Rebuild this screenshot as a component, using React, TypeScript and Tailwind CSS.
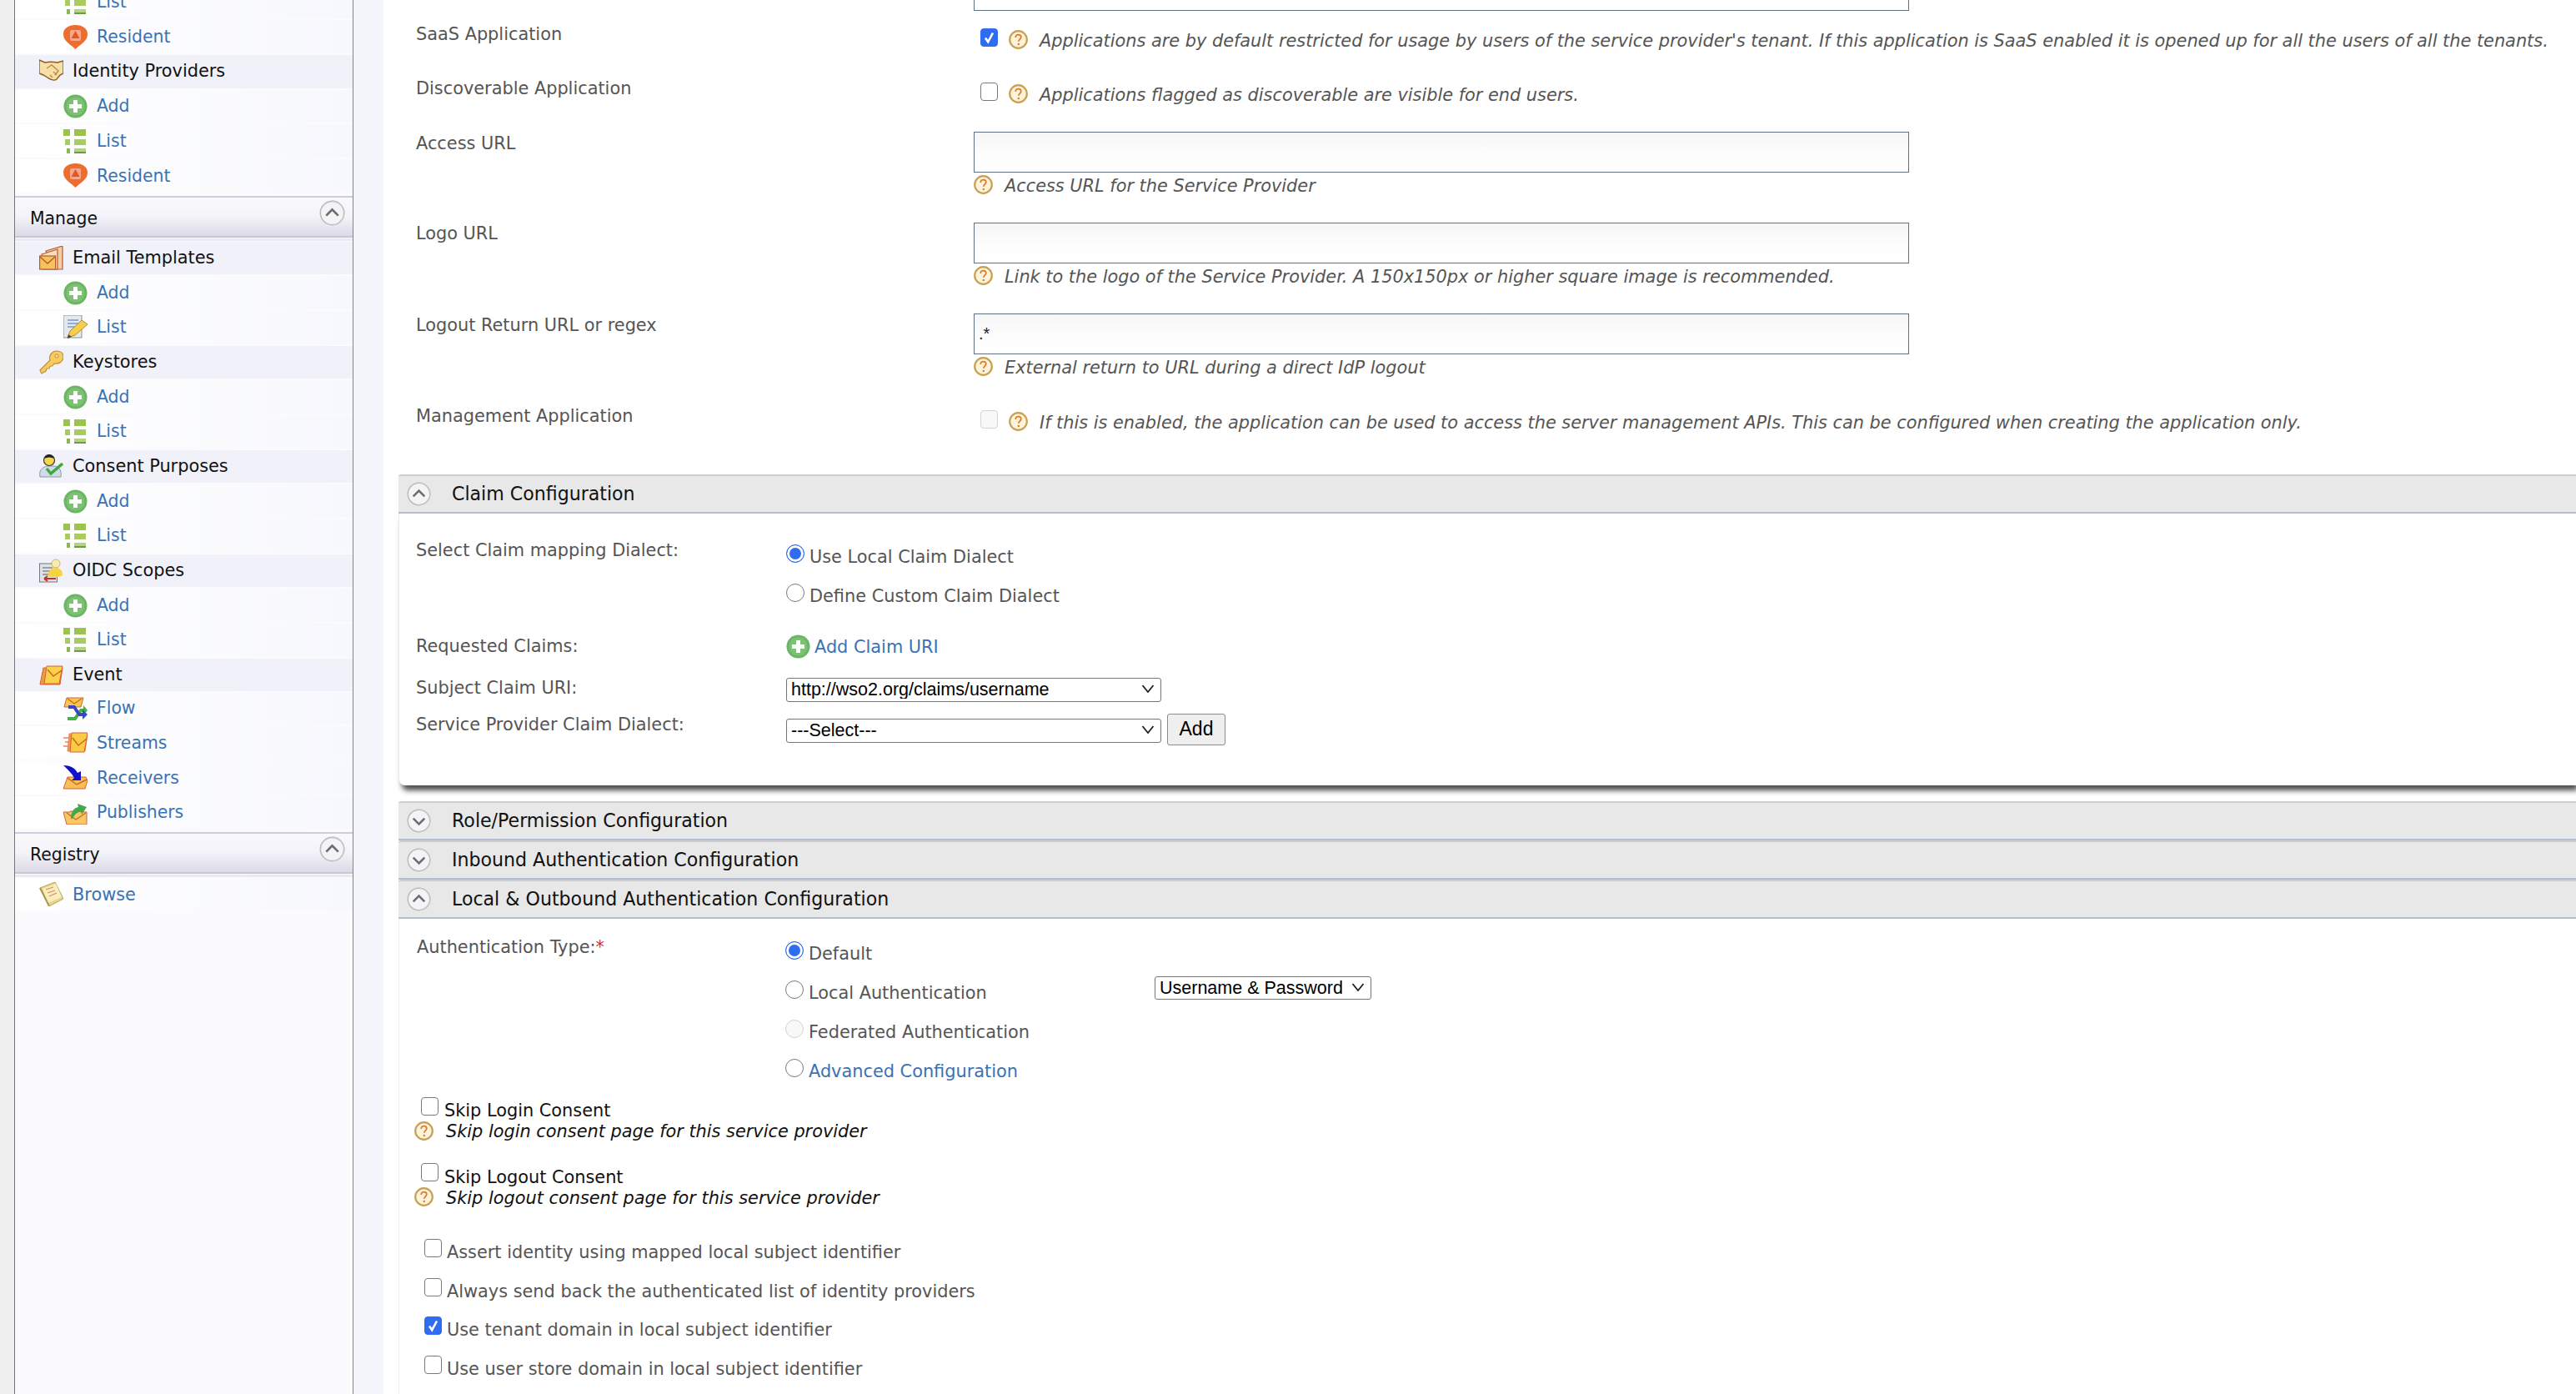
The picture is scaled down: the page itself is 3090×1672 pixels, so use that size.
import React from "react";

const S = ({ c }: { c: React.ReactNode }) => (
  <svg viewBox="0 0 29 29" className="w-[29px] h-[29px] shrink-0">{c}</svg>
);

const IPlus = () => (
  <S c={<>
    <circle cx="14.5" cy="14.5" r="14" fill="#6cb564" />
    <circle cx="14.5" cy="14.5" r="11" fill="#7dc273" />
    <path d="M14.5 7v15M7 14.5h15" stroke="#fff" strokeWidth="5" />
  </>} />
);
const IList = () => (
  <S c={<>
    <rect x="0" y="0" width="8" height="8" fill="#9cc24f" />
    <rect x="13" y="0" width="14" height="8" fill="#9cc24f" />
    <rect x="2" y="12" width="6" height="7" fill="#a9cc62" />
    <rect x="13" y="12" width="14" height="7" fill="#a9cc62" />
    <rect x="4" y="23" width="4" height="6" fill="#8db55a" />
    <rect x="13" y="23" width="14" height="6" fill="#b4d283" />
    <rect x="13" y="27" width="14" height="2" fill="#6e9a4a" />
  </>} />
);
const IResident = () => (
  <S c={<>
    <path d="M14.5 29 C10 24 0 20 0 11 C0 4 6 0 14.5 0 C23 0 29 4 29 11 C29 20 19 24 14.5 29Z" fill="#ee6c2d" />
    <rect x="8" y="6" width="13" height="13" rx="2" fill="#f6a888" />
    <path d="M14.5 7l5 9h-10z" fill="#e2552a" />
  </>} />
);
const IHands = () => (
  <S c={<>
    <path d="M0 1l7 3c5-1 9-1 15 0l7-2 0 15-4 2-4 5c-4 3-8 0-11-2l-5-3-5-2z" fill="#f7dfa8" stroke="#8e5a25" strokeWidth="1.4" />
    <path d="M9 11l6-4 8 7-4 5M13 19l3 3M17 15l4 4" fill="none" stroke="#c08a48" strokeWidth="1.4" />
  </>} />
);
const IEmailStack = () => (
  <S c={<>
    <path d="M8 6L28 0v28H20z" fill="#f2cfa8" stroke="#b85a2a" strokeWidth="1.2" />
    <path d="M3 10L22 4v24H4z" fill="#f7e0c2" stroke="#b85a2a" strokeWidth="1.2" />
    <rect x="0.6" y="12" width="19" height="16" fill="#f5c25f" stroke="#b85a2a" strokeWidth="1.2" />
    <path d="M1 13l9 8 9-8" fill="none" stroke="#b85a2a" strokeWidth="1.4" />
  </>} />
);
const IEdit = () => (
  <S c={<>
    <rect x="0" y="0" width="22" height="27" fill="#e4e8ef" stroke="#8b8f96" strokeWidth="1" />
    <path d="M5 6h13M5 10h13M5 14h9" stroke="#6f9bd6" strokeWidth="1.6" />
    <path d="M5 27l3-8L22 6l7 5L14 24z" fill="#f3cf4c" stroke="#b98a2a" strokeWidth="1" />
    <path d="M5 28l1-5 4 3z" fill="#444" />
  </>} />
);
const IKey = () => (
  <S c={<>
    <path d="M1 24l12-12c-2-6 3-11 8-11s8 3 8 7c0 6-6 9-11 8l-2 3h-3l-1 3h-3l-1 3-5 3z" fill="#f6cb63" stroke="#c98e2c" strokeWidth="1.2" />
    <circle cx="21" cy="7" r="2" fill="#fbe9a6" stroke="#c98e2c" />
  </>} />
);
const IPerson = () => (
  <S c={<>
    <path d="M1 27c-2-10 5-12 9-13h8c7 1 9 6 8 13z" fill="#cfdce8" stroke="#8b98a6" />
    <circle cx="12" cy="7" r="6.5" fill="#f2d64b" stroke="#333" strokeWidth="1.2" />
    <path d="M6 5c2-6 10-6 12 0-4-2-8-2-12 0z" fill="#222" />
    <path d="M9 17l5 6L28 11" fill="none" stroke="#3fa83f" strokeWidth="3.4" />
  </>} />
);
const IOidc = () => (
  <S c={<>
    <rect x="0.5" y="6" width="21" height="22" fill="#dfe2e6" stroke="#777" />
    <path d="M4 11h12M4 15h10M4 19h8" stroke="#888" strokeWidth="1.4" />
    <circle cx="20" cy="6" r="5" fill="#f8ecb0" stroke="#c9b66a" />
    <path d="M11 20c0-7 5-9 9-9s8 3 8 8c0 2-3 3-8 3s-9 0-9-2z" fill="#f6d341" />
    <path d="M6 24h14M6 24l4-3M6 24l4 3" stroke="#c3312b" strokeWidth="2" fill="none" />
  </>} />
);
const IEvent = () => (
  <S c={<>
    <path d="M5 6h23l-3 20H1z" fill="#ef9a3c" stroke="#d6603c" strokeWidth="1" />
    <path d="M9 4h19l-4 21H6z" fill="#fbd04a" stroke="#d6603c" strokeWidth="1" />
    <path d="M10 8l7 8 10-7" fill="none" stroke="#c66a1e" strokeWidth="1.5" />
  </>} />
);
const IFlow = () => (
  <S c={<>
    <path d="M4 2h20l-3 11H1z" fill="#fbc64e" stroke="#d6603c" />
    <path d="M5 3l8 6 9-6" fill="none" stroke="#c66a1e" strokeWidth="1.2" />
    <path d="M5 25h8l7-10h4v-4l5 6-5 6v-4h-2l-7 10H5z" fill="#43b04a" />
    <path d="M6 11h8l6 9h3v-4l6 6-6 6v-4h-5l-6-9H6z" fill="#3846c0" />
  </>} />
);
const IStreams = () => (
  <S c={<>
    <path d="M0 8h6M2 13h4M0 18h6" stroke="#e8836a" strokeWidth="1.4" />
    <path d="M7 3h22l-3 21H5z" fill="#ef9a3c" stroke="#e8836a" />
    <path d="M10 2h19l-4 23H8z" fill="#fbcb48" stroke="#d6603c" />
    <path d="M11 8l7 9 10-8" fill="none" stroke="#c66a1e" strokeWidth="1.5" />
  </>} />
);
const IReceivers = () => (
  <S c={<>
    <path d="M5 14h22l2 4-3 10H0z" fill="#f7bf55" stroke="#d6603c" />
    <path d="M5 15l11 8 12-6" fill="none" stroke="#c66a1e" strokeWidth="1.5" />
    <path d="M0 0c8 0 14 3 17 9l4-2v11H10l3-3C10 9 5 5 0 0z" fill="#1010c8" />
  </>} />
);
const IPublishers = () => (
  <S c={<>
    <path d="M0 14h8v-1l20 1v15H4z" fill="#f7c766" stroke="#d6603c" />
    <path d="M4 15l11 8 12-8" fill="none" stroke="#c66a1e" strokeWidth="1.3" />
    <path d="M9 22c0-9 4-13 9-14l-1-4 11 4-6 9-1-4c-4 1-8 4-10 9z" fill="#43a84a" />
  </>} />
);
const IBook = () => (
  <S c={<>
    <path d="M1 7L19 0l10 20-17 9z" fill="#e9d38b" stroke="#b9a563" />
    <path d="M4 8L20 2l7 16-16 7z" fill="#f7eec0" />
    <path d="M8 9l9-3M10 13l9-3M12 17l9-4" stroke="#d98a5a" strokeWidth="1.2" />
    <path d="M1 7l11 22" stroke="#a99650" strokeWidth="2" />
  </>} />
);
const Help = () => (
  <svg viewBox="0 0 23 23" className="w-[23px] h-[23px] shrink-0">
    <circle cx="11.5" cy="11.5" r="10.3" fill="#fbf3dc" stroke="#c9a04f" strokeWidth="2.2" />
    <path d="M8.2 9c0-2.2 1.4-3.4 3.4-3.4s3.2 1.2 3.2 3c0 2.4-3 2.6-3 5.2" fill="none" stroke="#dd7b2a" strokeWidth="1.8" />
    <circle cx="11.8" cy="17" r="1.2" fill="#dd7b2a" />
  </svg>
);
const Chevron = ({ up, size }: { up: boolean; size: string }) => (
  <svg viewBox="0 0 30 30" className={size + " shrink-0"}>
    <circle cx="15" cy="15" r="13.7" fill="#f4f4f6" stroke="#bdbdbd" strokeWidth="1.6" />
    <path d="M15 29a14 14 0 0 0 0-28" fill="none" stroke="#c9c9c9" strokeWidth="1" />
    <path d={up ? "M8 18l7-7 7 7" : "M8 12l7 7 7-7"} fill="none" stroke="#6d6d6d" strokeWidth="2.6" />
  </svg>
);

const Head = ({ icon, text, link, tx }: { icon: React.ReactNode; text: string; link?: boolean; tx?: string }) => (
  <div className={"h-[39.67px] mb-[2px] flex items-center pl-[29px] gap-[11px] text-[20.85px] " + (link ? "bg-[linear-gradient(90deg,#ffffff,#f7f8fd)] text-[#3a72b5]" : "bg-[#f0f1f9] text-[#111111]")}>
    {icon}
    <span className={tx ?? ""}>{text}</span>
  </div>
);
const Sub = ({ icon, text }: { icon: React.ReactNode; text: string }) => (
  <div className="h-[39.67px] mb-[2px] flex items-center pl-[58px] gap-[11px] bg-[linear-gradient(90deg,#ffffff,#f7f8fd)] text-[#3a72b5]">
    {icon}
    <span>{text}</span>
  </div>
);
const Section = ({ text, mt }: { text: string; mt: string }) => (
  <div className={mt + " h-[55px] shrink-0"}>
    <div className="h-[50px] flex items-center justify-between pl-[18px] pr-[9px] text-[#111111] border-t-2 border-t-[#cfcddc] border-b-2 border-b-[#c9c5d8] bg-[linear-gradient(180deg,#f9f9fd,#f3f3f9_50%,#dcdae6)]">
      <span className="mt-[6px]">{text}</span>
      <Chevron up size="w-[31px] h-[31px] -mt-[8px]" />
    </div>
    <div className="h-[3px] mt-[1px] bg-[#e9e9f0]" />
  </div>
);

const Sidebar = () => (
  <aside className="w-[460px] shrink-0 h-[1672px] overflow-hidden flex bg-[#f4f5fb] text-[20.4px] font-['DejaVu_Sans',sans-serif]">
    <div className="w-[17px] bg-[#f0f0f0] shrink-0" />
    <div className="w-[407px] shrink-0 bg-[#fbfbfe] border-l-[1.5px] border-l-[#757575] border-r-[1.5px] border-r-[#8b8b55] -mb-px">
      <div className="-mt-[17.3px]">
        <Sub icon={<IList />} text="List" />
        <Sub icon={<IResident />} text="Resident" />
        <Head icon={<IHands />} text="Identity Providers" />
        <Sub icon={<IPlus />} text="Add" />
        <Sub icon={<IList />} text="List" />
        <Sub icon={<IResident />} text="Resident" />
      </div>
      <Section text="Manage" mt="mt-[4px]" />
      <Head icon={<IEmailStack />} text="Email Templates" tx="mt-[1px]" />
      <Sub icon={<IPlus />} text="Add" />
      <Sub icon={<IEdit />} text="List" />
      <Head icon={<IKey />} text="Keystores" tx="mt-[1px]" />
      <Sub icon={<IPlus />} text="Add" />
      <Sub icon={<IList />} text="List" />
      <Head icon={<IPerson />} text="Consent Purposes" />
      <Sub icon={<IPlus />} text="Add" />
      <Sub icon={<IList />} text="List" />
      <Head icon={<IOidc />} text="OIDC Scopes" />
      <Sub icon={<IPlus />} text="Add" />
      <Sub icon={<IList />} text="List" />
      <Head icon={<IEvent />} text="Event" />
      <div className="-mt-[1.5px]">
        <Sub icon={<IFlow />} text="Flow" />
        <Sub icon={<IStreams />} text="Streams" />
        <Sub icon={<IReceivers />} text="Receivers" />
        <Sub icon={<IPublishers />} text="Publishers" />
      </div>
      <Section text="Registry" mt="mt-[3.5px]" />
      <Head icon={<IBook />} text="Browse" link tx="mt-[2px]" />
    </div>
  </aside>
);

const Txt = ({ className, children }: { className?: string; children: React.ReactNode }) => (
  <span className={"leading-[30px] whitespace-nowrap " + (className ?? "")}>{children}</span>
);

const TextField = ({ value }: { value?: string }) => (
  <input
    readOnly
    value={value ?? ""}
    className="block w-[1122px] h-[49px] border-[1.5px] border-[#5d6f82] bg-[linear-gradient(180deg,#f6f6f6,#fdfdfd_60%,#ffffff)] px-[5px] text-[#222222] text-[20px] font-['Liberation_Sans',sans-serif]"
  />
);

const Check = ({ on, disabled }: { on?: boolean; disabled?: boolean }) => (
  <span className="relative block w-[21px] h-[22px] shrink-0">
    <input
      type="checkbox"
      readOnly
      checked={!!on}
      disabled={disabled}
      className="block appearance-none m-0 w-full h-full rounded-[4px] border-[1.5px] border-[#7a7a7a] bg-white checked:bg-[#2f6cf0] checked:border-[#2f6cf0] disabled:border-[#d4d4d4] disabled:bg-[#f8f8f8]"
    />
    {on && (
      <svg viewBox="0 0 21 22" className="absolute inset-0 w-full h-full pointer-events-none">
        <path d="M6 11.5l3.2 4.8L15 5.5" fill="none" stroke="#fff" strokeWidth="2.6" />
      </svg>
    )}
  </span>
);
const Radio = ({ on, disabled }: { on?: boolean; disabled?: boolean }) => (
  <input
    type="radio"
    readOnly
    checked={!!on}
    disabled={disabled}
    className="block appearance-none m-0 w-[22px] h-[22px] shrink-0 rounded-full border-[1.5px] border-[#7a7a7a] bg-white checked:border-[#2f6cf0] checked:bg-[#2f6cf0] checked:shadow-[inset_0_0_0_3px_#ffffff] disabled:border-[#d4d4d4] disabled:bg-[#f8f8f8]"
  />
);

const Select = ({ value, w, h }: { value: string; w: string; h: string }) => (
  <div className={"relative shrink-0 " + w + " " + h}>
    <select
      value={value}
      onChange={() => {}}
      className="appearance-none w-full h-full rounded-[3px] border-[1.5px] border-[#767676] bg-white pl-[5px] text-[21.5px] text-black leading-none font-['Liberation_Sans',sans-serif]"
    >
      <option>{value}</option>
    </select>
    <svg viewBox="0 0 16 10" className="absolute right-[8px] top-[9px] w-[16px] h-[10px] pointer-events-none">
      <path d="M1.5 1l6.5 8 6.5-8" fill="none" stroke="#222" strokeWidth="1.8" />
    </svg>
  </div>
);

const ConfigHeader = ({ text, up, mt }: { text: string; up?: boolean; mt?: string }) => (
  <div className={(mt ?? "") + " h-[47px] shrink-0 flex items-center pl-[10px] gap-[25px] bg-[#e8e8e8] border-t-2 border-t-[#cdcdd0] border-b-2 border-b-[#b4bcd4] text-[#111111] text-[22.1px] rounded-tl-[3px]"}>
    <Chevron up={!!up} size="w-[29px] h-[29px]" />
    <span>{text}</span>
  </div>
);

const TopRow = ({ label, h, children, pt }: { label: string; h: string; children: React.ReactNode; pt?: string }) => (
  <div className={h + " flex shrink-0"}>
    <div className={"w-[690px] shrink-0 pl-[21px] " + (pt ?? "pt-[13px]")}>
      <Txt>{label}</Txt>
    </div>
    <div className="flex-1 min-w-0">{children}</div>
  </div>
);
const CheckRow = ({ on, disabled, text, pt }: { on?: boolean; disabled?: boolean; text: string; pt: string }) => (
  <div className={"flex items-start " + pt}>
    <div className="ml-[8px] mt-[-1px]"><Check on={on} disabled={disabled} /></div>
    <div className="ml-[13px] mt-[1px]"><Help /></div>
    <Txt className="ml-[14px] -mt-[1px] italic">{text}</Txt>
  </div>
);
const UrlBlock = ({ value, text }: { value?: string; text: string }) => (
  <div className="pt-[14px]">
    <TextField value={value} />
    <div className="flex items-start mt-[3px]">
      <Help />
      <Txt className="ml-[14px] -mt-[2px] italic">{text}</Txt>
    </div>
  </div>
);
const RadioLine = ({ on, disabled, children, w }: { on?: boolean; disabled?: boolean; children: React.ReactNode; w?: string }) => (
  <div className={"h-[47px] flex items-start shrink-0 " + (w ?? "")}>
    <div className="mt-[8px]"><Radio on={on} disabled={disabled} /></div>
    <Txt className="ml-[6px] mt-[8px]">{children}</Txt>
  </div>
);
const BottomCheck = ({ on, text }: { on?: boolean; text: string }) => (
  <div className="h-[46.67px] flex items-start pl-[30px] shrink-0">
    <Check on={on} />
    <Txt className="ml-[6px] mt-[1px]">{text}</Txt>
  </div>
);

const Main = () => (
  <main className="flex-1 min-w-0 h-[1672px] overflow-hidden pl-[18px] bg-white text-[#555555] text-[20.85px] font-['DejaVu_Sans',sans-serif]">
    <div className="h-[13px] overflow-hidden flex">
      <div className="w-[690px] shrink-0" />
      <div className="-mt-[36px]"><TextField /></div>
    </div>
    <TopRow label="SaaS Application" h="h-[65px]">
      <CheckRow on pt="pt-[22px]" text="Applications are by default restricted for usage by users of the service provider's tenant. If this application is SaaS enabled it is opened up for all the users of all the tenants." />
    </TopRow>
    <TopRow label="Discoverable Application" h="h-[66px]">
      <CheckRow pt="pt-[22px]" text="Applications flagged as discoverable are visible for end users." />
    </TopRow>
    <TopRow label="Access URL" h="h-[109px]">
      <UrlBlock text="Access URL for the Service Provider" />
    </TopRow>
    <TopRow label="Logo URL" h="h-[109px]" pt="pt-[12px]">
      <UrlBlock text="Link to the logo of the Service Provider. A 150x150px or higher square image is recommended." />
    </TopRow>
    <TopRow label="Logout Return URL or regex" h="h-[109px]">
      <UrlBlock value=".*" text="External return to URL during a direct IdP logout" />
    </TopRow>
    <TopRow label="Management Application" h="h-[98px]">
      <CheckRow disabled pt="pt-[22px]" text="If this is enabled, the application can be used to access the server management APIs. This can be configured when creating the application only." />
    </TopRow>

    <ConfigHeader text="Claim Configuration" up />
    <div className="h-[326px] rounded-bl-[8px] border-l border-l-[#ececec] bg-white shadow-[3px_7px_6px_-1px_rgba(0,0,0,0.7)] pt-[29px]">
      <div className="flex">
        <div className="w-[464px] shrink-0 pl-[20px]"><Txt>Select Claim mapping Dialect:</Txt></div>
        <div className="flex flex-col">
          <RadioLine on>Use Local Claim Dialect</RadioLine>
          <RadioLine>Define Custom Claim Dialect</RadioLine>
        </div>
      </div>
      <div className="flex h-[50.5px] mt-[21px]">
        <div className="w-[464px] shrink-0 pl-[20px]"><Txt>Requested Claims:</Txt></div>
        <div className="flex items-start mt-[1px]">
          <IPlus />
          <Txt className="ml-[5px] text-[#3a72b5]">Add Claim URI</Txt>
        </div>
      </div>
      <div className="flex h-[44px]">
        <div className="w-[464px] shrink-0 pl-[20px]"><Txt className="-mt-[1px] block">Subject Claim URI:</Txt></div>
        <div className="mt-[1px]"><Select value="http://wso2.org/claims/username" w="w-[450px]" h="h-[29px]" /></div>
      </div>
      <div className="flex">
        <div className="w-[464px] shrink-0 pl-[20px]"><Txt className="-mt-[1px] block">Service Provider Claim Dialect:</Txt></div>
        <div className="mt-[6px]"><Select value="---Select---" w="w-[450px]" h="h-[29px]" /></div>
        <button className="ml-[7px] mt-[1px] w-[70px] h-[38px] rounded-[3px] bg-[#efefef] border-[1.5px] border-[#8a8a8a] text-black text-[23px] font-['Liberation_Sans',sans-serif]">Add</button>
      </div>
    </div>

    <ConfigHeader mt="mt-[19px]" text="Role/Permission Configuration" />
    <ConfigHeader text="Inbound Authentication Configuration" />
    <ConfigHeader text="Local & Outbound Authentication Configuration" up />
    <div className="border-l border-l-[#ececec] h-[600px]">
      <div className="flex pt-[18.5px]">
        <div className="w-[463px] shrink-0 pl-[21px]">
          <Txt>Authentication Type:<span className="text-[#e02a20]">*</span></Txt>
        </div>
        <div className="flex flex-col">
          <RadioLine on>Default</RadioLine>
          <div className="flex">
            <RadioLine w="w-[443px]">Local Authentication</RadioLine>
            <div className="mt-[2px]"><Select value="Username & Password" w="w-[260px]" h="h-[28px]" /></div>
          </div>
          <RadioLine disabled>Federated Authentication</RadioLine>
          <RadioLine><span className="text-[#3a72b5]">Advanced Configuration</span></RadioLine>
        </div>
      </div>
      <div className="mt-[7px] h-[58.5px]">
        <div className="h-[28.5px] flex items-start pl-[26px]">
          <Check />
          <Txt className="ml-[7px] mt-[1px] text-[#111111]">Skip Login Consent</Txt>
        </div>
        <div className="flex items-start pl-[18px]">
          <div className="mt-[1px]"><Help /></div>
          <Txt className="ml-[15px] -mt-[2px] italic text-[#111111]">Skip login consent page for this service provider</Txt>
        </div>
      </div>
      <div className="mt-[20.5px] h-[58px]">
        <div className="h-[28.5px] flex items-start pl-[26px]">
          <Check />
          <Txt className="ml-[7px] mt-[2px] text-[#111111]">Skip Logout Consent</Txt>
        </div>
        <div className="flex items-start pl-[18px]">
          <div className="mt-[1px]"><Help /></div>
          <Txt className="ml-[15px] -mt-[1px] italic text-[#111111]">Skip logout consent page for this service provider</Txt>
        </div>
      </div>
      <div className="mt-[33.5px]">
        <BottomCheck text="Assert identity using mapped local subject identifier" />
        <BottomCheck text="Always send back the authenticated list of identity providers" />
        <BottomCheck on text="Use tenant domain in local subject identifier" />
        <BottomCheck text="Use user store domain in local subject identifier" />
      </div>
    </div>
  </main>
);

export default function App() {
  return (
    <div className="flex w-[3090px] h-[1672px] overflow-hidden bg-white">
      <Sidebar />
      <Main />
    </div>
  );
}
